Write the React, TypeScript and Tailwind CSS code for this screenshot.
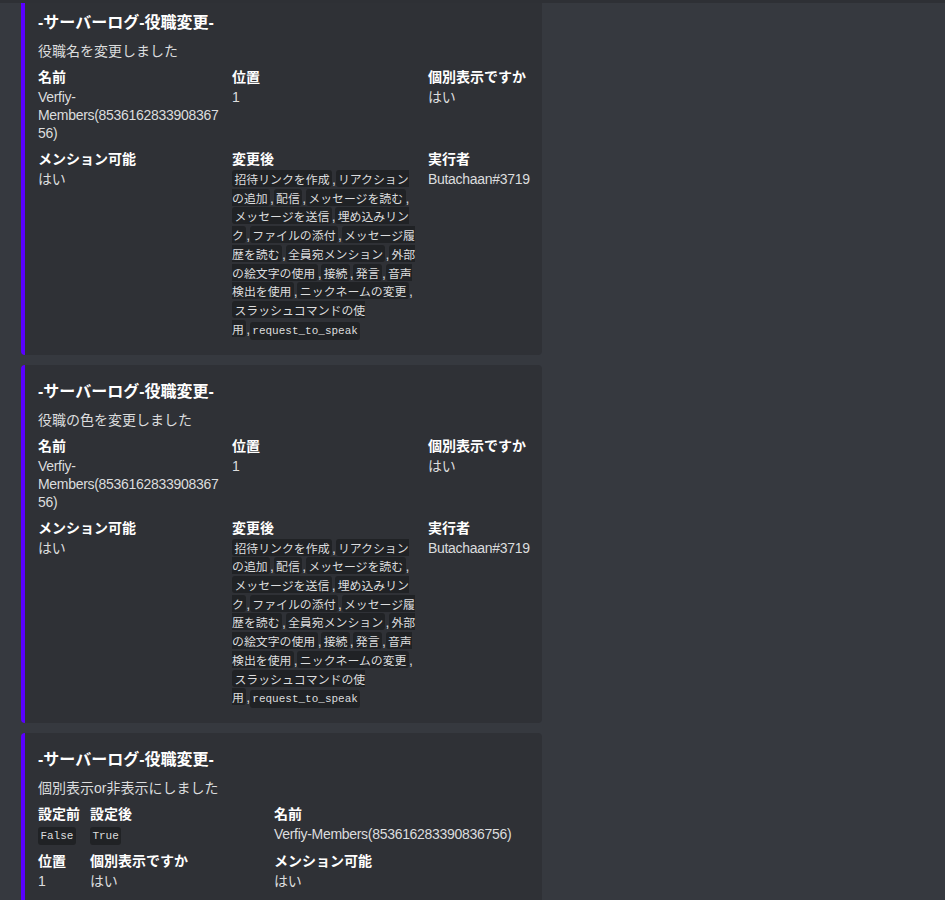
import React from 'react';

const perms = [
  '招待リンクを作成',
  'リアクションの追加',
  '配信',
  'メッセージを読む',
  'メッセージを送信',
  '埋め込みリンク',
  'ファイルの添付',
  'メッセージ履歴を読む',
  '全員宛メンション',
  '外部の絵文字の使用',
  '接続',
  '発言',
  '音声検出を使用',
  'ニックネームの変更',
  'スラッシュコマンドの使用',
  'request_to_speak',
];

function Code({ children }: { children: string }) {
  const ascii = /^[\x00-\x7f]+$/.test(children);
  if (ascii) {
    return (
      <code className="rounded-[3px] bg-[#202225] px-[2.4px] py-[3px] font-['Liberation_Mono','Noto_Sans_CJK_JP',monospace] text-[11px] leading-[16px] tracking-normal text-[#dcddde]">
        {children}
      </code>
    );
  }
  return (
    <code className="rounded-[3px] bg-[#202225] px-[2.4px] font-['Noto_Sans_CJK_JP',monospace] text-[11.9px] leading-[16px] tracking-normal text-[#dcddde]">
      {children}
    </code>
  );
}

function Field({ name, children }: { name: string; children: React.ReactNode }) {
  return (
    <div className="min-w-0">
      <div className="mb-[2px] text-[14px] font-bold leading-[18px] text-white">{name}</div>
      <div className="break-words text-[14px] leading-[18px] tracking-[-0.3px] text-[#dcddde]">{children}</div>
    </div>
  );
}

function PermList() {
  return (
    <div className="leading-[18.7px]">
      {perms.map((p, i) => (
        <React.Fragment key={p}>
          {i > 0 && ','}
          <Code>{p}</Code>
        </React.Fragment>
      ))}
    </div>
  );
}

function Embed({ desc, children }: { desc: string; children: React.ReactNode }) {
  return (
    <div className="w-[521px] rounded-[4px] border-l-4 border-[#5900ff] bg-[#2f3136] pb-4 pl-[13px] pr-4 pt-2">
      <div className="mt-2 text-[16px] font-bold leading-[22px] text-white">-サーバーログ-役職変更-</div>
      <div className="mt-2 text-[14px] leading-[18px] text-[#dcddde]">{desc}</div>
      {children}
    </div>
  );
}

function RoleEmbed({ desc }: { desc: string }) {
  return (
    <Embed desc={desc}>
      <div className="mt-2 grid grid-cols-[186px_188px_186px] gap-x-2 gap-y-2">
        <Field name="名前">Verfiy-Members(853616283390836756)</Field>
        <Field name="位置">1</Field>
        <Field name="個別表示ですか">はい</Field>
        <Field name="メンション可能">はい</Field>
        <Field name="変更後">
          <PermList />
        </Field>
        <Field name="実行者">Butachaan#3719</Field>
      </div>
    </Embed>
  );
}

export default function App() {
  return (
    <div className="relative h-[900px] overflow-hidden bg-[#36393f] font-['Liberation_Sans','Noto_Sans_CJK_JP',sans-serif]">
      <div className="absolute left-0 right-0 top-0 z-10 h-[3px] bg-[#2e3035]" />
      <div className="-mt-1 flex flex-col gap-[10px] pl-[21px]">
        <RoleEmbed desc="役職名を変更しました" />
        <RoleEmbed desc="役職の色を変更しました" />
        <Embed desc="個別表示or非表示にしました">
          <div className="mt-2 grid grid-cols-[44px_176px_1fr] gap-x-2 gap-y-2">
            <Field name="設定前">
              <Code>False</Code>
            </Field>
            <Field name="設定後">
              <Code>True</Code>
            </Field>
            <Field name="名前">Verfiy-Members(853616283390836756)</Field>
            <Field name="位置">1</Field>
            <Field name="個別表示ですか">はい</Field>
            <Field name="メンション可能">はい</Field>
          </div>
        </Embed>
      </div>
    </div>
  );
}
